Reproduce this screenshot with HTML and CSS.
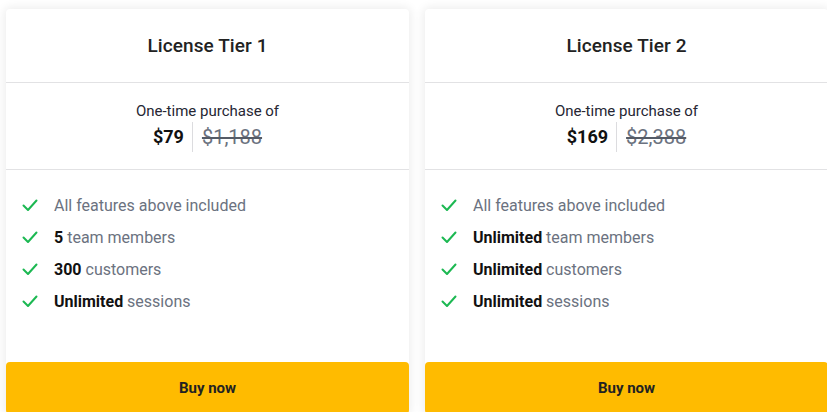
FILE: index.html
```html
<!DOCTYPE html>
<html>
<head>
<meta charset="utf-8">
<link rel="stylesheet" href="styles.css">
</head>
<body>
<div class="plans">
  <div class="card">
    <div class="card-head"><h2>License Tier 1</h2></div>
    <div class="card-price">
      <div class="label">One-time purchase of</div>
      <div class="price-row"><span class="now">$79</span><span class="was">$1,188</span></div>
    </div>
    <ul class="features">
      <li><svg class="check" viewBox="0 0 16 16"><polyline points="1.5,8.5 6,13 14.5,3.5"/></svg><span>All features above included</span></li>
      <li><svg class="check" viewBox="0 0 16 16"><polyline points="1.5,8.5 6,13 14.5,3.5"/></svg><span><b>5</b> team members</span></li>
      <li><svg class="check" viewBox="0 0 16 16"><polyline points="1.5,8.5 6,13 14.5,3.5"/></svg><span><b>300</b> customers</span></li>
      <li><svg class="check" viewBox="0 0 16 16"><polyline points="1.5,8.5 6,13 14.5,3.5"/></svg><span><b>Unlimited</b> sessions</span></li>
    </ul>
    <button class="buy">Buy now</button>
  </div>
  <div class="card">
    <div class="card-head"><h2>License Tier 2</h2></div>
    <div class="card-price">
      <div class="label">One-time purchase of</div>
      <div class="price-row"><span class="now">$169</span><span class="was">$2,388</span></div>
    </div>
    <ul class="features">
      <li><svg class="check" viewBox="0 0 16 16"><polyline points="1.5,8.5 6,13 14.5,3.5"/></svg><span>All features above included</span></li>
      <li><svg class="check" viewBox="0 0 16 16"><polyline points="1.5,8.5 6,13 14.5,3.5"/></svg><span><b>Unlimited</b> team members</span></li>
      <li><svg class="check" viewBox="0 0 16 16"><polyline points="1.5,8.5 6,13 14.5,3.5"/></svg><span><b>Unlimited</b> customers</span></li>
      <li><svg class="check" viewBox="0 0 16 16"><polyline points="1.5,8.5 6,13 14.5,3.5"/></svg><span><b>Unlimited</b> sessions</span></li>
    </ul>
    <button class="buy">Buy now</button>
  </div>
</div>
</body>
</html>
```
FILE: styles.css
```css
html, body {
  margin: 0;
  padding: 0;
  background: #ffffff;
  font-family: Roboto, "Liberation Sans", sans-serif;
  overflow: hidden;
}
.plans {
  display: flex;
  gap: 16px;
  padding: 9px 0 0 6px;
}
.card {
  flex: 0 0 403px;
  width: 403px;
  background: #fff;
  border-radius: 4px;
  box-shadow: 0 0 10px 2px rgba(0,0,0,0.07);
  display: flex;
  flex-direction: column;
}
.card-head {
  height: 73px;
  display: flex;
  align-items: center;
  justify-content: center;
  border-bottom: 1px solid #e2e2e4;
}
.card-head h2 {
  margin: 0;
  font-size: 19px;
  font-weight: 500;
  color: #222;
  letter-spacing: 0.1px;
}
.card-price {
  height: 87px;
  border-bottom: 1px solid #e2e2e4;
  display: flex;
  flex-direction: column;
  align-items: center;
  padding-top: 18px;
  box-sizing: border-box;
}
.label {
  font-size: 15px;
  color: #262633;
  line-height: 20px;
}
.price-row {
  display: flex;
  align-items: center;
  margin-top: 1px;
  height: 30px;
}
.now {
  font-size: 18px;
  font-weight: 700;
  color: #111;
  padding-right: 8px;
  border-right: 1px solid #dcdcdf;
  line-height: 30px;
}
.was {
  font-size: 20px;
  color: #6b7280;
  text-decoration: line-through;
  text-decoration-color: #555b66;
  padding-left: 9px;
  line-height: 30px;
}
.features {
  list-style: none;
  margin: 0;
  padding: 19px 0 0 16px;
  height: 192px;
  box-sizing: border-box;
}
.features li {
  display: flex;
  align-items: center;
  height: 32px;
  font-size: 16px;
  color: #6b7280;
}
.check {
  width: 16px;
  height: 16px;
  margin-right: 16px;
  fill: none;
  stroke: #1cb852;
  stroke-width: 2;
  stroke-linecap: round;
  stroke-linejoin: round;
}
.features b {
  color: #111;
  font-weight: 700;
}
.buy {
  height: 52px;
  border: none;
  border-radius: 4px;
  background: #ffbb00;
  color: #222;
  font-family: Roboto, "Liberation Sans", sans-serif;
  font-size: 15px;
  font-weight: 700;
  cursor: pointer;
}
```
